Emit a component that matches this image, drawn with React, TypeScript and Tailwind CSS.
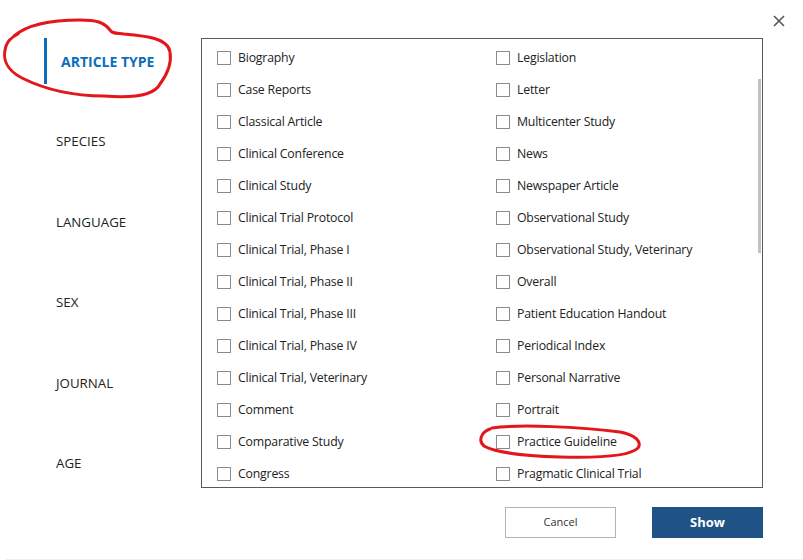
import React from 'react';

const left = [
  'Biography',
  'Case Reports',
  'Classical Article',
  'Clinical Conference',
  'Clinical Study',
  'Clinical Trial Protocol',
  'Clinical Trial, Phase I',
  'Clinical Trial, Phase II',
  'Clinical Trial, Phase III',
  'Clinical Trial, Phase IV',
  'Clinical Trial, Veterinary',
  'Comment',
  'Comparative Study',
  'Congress',
];

const right = [
  'Legislation',
  'Letter',
  'Multicenter Study',
  'News',
  'Newspaper Article',
  'Observational Study',
  'Observational Study, Veterinary',
  'Overall',
  'Patient Education Handout',
  'Periodical Index',
  'Personal Narrative',
  'Portrait',
  'Practice Guideline',
  'Pragmatic Clinical Trial',
];

const nav = ['ARTICLE TYPE', 'SPECIES', 'LANGUAGE', 'SEX', 'JOURNAL', 'AGE'];

const Item: React.FC<{ label: string }> = ({ label }) => (
  <label className="flex h-[32px] items-center gap-[7px] text-[12.3px] tracking-[-0.2px] text-[#222]">
    <span className="block h-[14px] w-[14px] shrink-0 border border-[#8a8a8a] bg-white" />
    <span className="whitespace-nowrap">{label}</span>
  </label>
);

export default function App() {
  return (
    <div
      className="relative h-[560px] w-[803px] overflow-hidden bg-white"
      style={{ fontFamily: '"Open Sans", "Noto Sans", sans-serif' }}
    >
      <button className="absolute right-[18px] top-[15px] text-[#555]" aria-label="Close">
        <svg width="12" height="12" viewBox="0 0 12 12" fill="none" stroke="currentColor" strokeWidth="1.6">
          <path d="M1 1 L11 11 M11 1 L1 11" />
        </svg>
      </button>

      <div className="flex pt-[38px]">
        <nav className="w-[201px] shrink-0 -mt-[17px] pl-[44px]">
          {nav.map((n, i) => (
            <div key={n} className="flex h-[80.6px] items-center">
              {i === 0 ? (
                <div className="flex h-[46px] items-center border-l-[3px] border-[#0a6ebd] pl-[14px] text-[14px] font-bold text-[#0a6ebd]">
                  {n}
                </div>
              ) : (
                <div className="pl-[12px] text-[13.3px] text-[#222]">{n}</div>
              )}
            </div>
          ))}
        </nav>

        <div className="flex w-[562px] flex-col">
          <div className="relative h-[450px] overflow-hidden border border-[#5a5a5a]">
            <div className="grid grid-cols-[279px_1fr] pl-[15px] pt-[3px]">
              <div>
                {left.map((l) => (
                  <Item key={l} label={l} />
                ))}
              </div>
              <div>
                {right.map((l) => (
                  <Item key={l} label={l} />
                ))}
              </div>
            </div>
            <div className="absolute right-[1px] top-[40px] h-[174px] w-[3px] bg-[#c1c1c1]" />
          </div>

          <div className="mt-[19px] flex justify-end gap-[36px]">
            <button className="h-[31px] w-[111px] border border-[#b3b3b3] bg-white text-[11px] text-[#333]">
              Cancel
            </button>
            <button className="h-[31px] w-[111px] bg-[#1f5385] text-[13px] font-bold text-white">
              Show
            </button>
          </div>
        </div>
      </div>

      <div className="absolute bottom-0 left-[6px] right-0 h-[1px] bg-[#eeeeee]" />

      <svg className="pointer-events-none absolute left-0 top-0" width="803" height="560" fill="none" stroke="#e3161b" strokeWidth="3" strokeLinecap="round">
        <path d="M14 36 C28 24 52 20 80 20 C96 20 104 22 110 30 C112 34 118 33 124 34 C146 36 168 38 170 52 C172 64 166 76 160 84 C154 96 130 98 104 96 C76 96 46 90 22 78 C6 70 2 58 6 46 C8 40 12 37 18 34" />
        <path d="M492 428 C520 424 580 427 620 432 C636 435 642 442 638 448 C630 456 596 458 560 457 C524 456 494 452 484 446 C478 441 481 432 490 429" />
      </svg>
    </div>
  );
}
